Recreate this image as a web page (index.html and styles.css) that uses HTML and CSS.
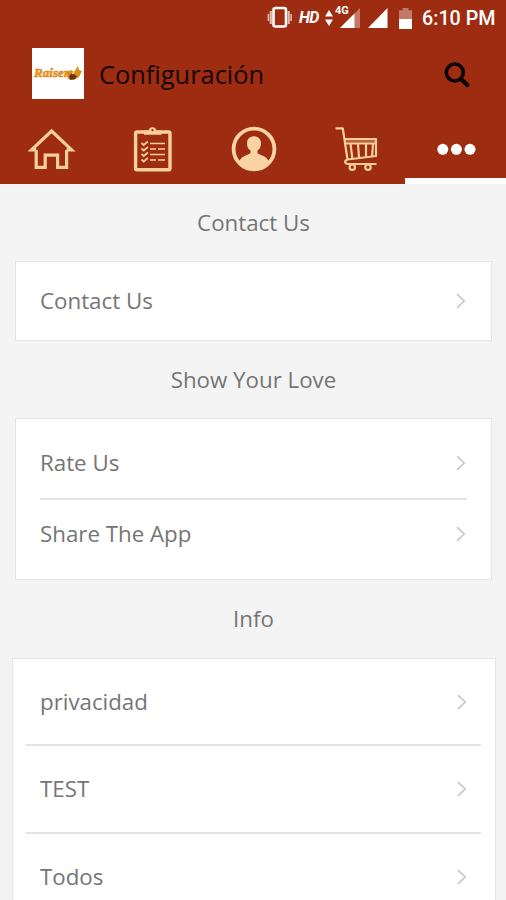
FILE: index.html
```
<!DOCTYPE html>
<html lang="es">
<head>
<meta charset="utf-8">
<meta name="viewport" content="width=device-width">
<title>Configuración</title>
<link rel="stylesheet" href="styles.css">
</head>
<body>
<svg class="sprite" width="0" height="0">
  <symbol id="chevron" viewBox="0 0 12 18"><path d="M2 2.2 9.2 9 2 15.8" fill="none" stroke="#c9c9c9" stroke-width="1.7"/></symbol>
</svg>
<header class="header">
  <div class="status">
    <svg class="vibrate" width="26" height="24" viewBox="267 6 26 24"><rect x="273.5" y="8" width="12.5" height="18.5" rx="2" fill="none" stroke="#fff" stroke-width="2.6"/><path d="M270.8 11v13M288.7 11v13" stroke="#e0bcb0" stroke-width="2.2"/><path d="M268.4 14v7M291.1 14v7" stroke="#e0bcb0" stroke-width="1.6"/></svg>
    <span class="hd">HD</span>
    <svg class="arrows" width="8" height="18" viewBox="0 0 8 18"><path d="M4 1 8 7.5H0zM4 17 0 10.5h8z" fill="#fff"/></svg>
    <div class="cell">
      <svg width="21" height="20" viewBox="0 0 21 20"><path d="M20 0v20H0z" fill="#c27966"/><path d="M14.5 5.5V20H0z" fill="#fff"/></svg>
      <span class="network">4G</span>
    </div>
    <svg class="signal" width="20" height="20" viewBox="0 0 20 20"><path d="M19.5 0v20H0z" fill="#fff"/></svg>
    <svg class="battery" width="13" height="21" viewBox="0 0 13 21"><path d="M3.5 0h6v2.3H13V11H0V2.3h3.5z" fill="#c27966"/><path d="M0 11h13v10H0z" fill="#fff"/></svg>
    <span class="time">6:10 PM</span>
  </div>
  <div class="titlebar">
    <div class="logo"><svg width="50" height="22" viewBox="0 0 50 22"><path d="m33 11 5-3 3 2 4-6 1 4 3 1-3 6-5 3-6-1z" fill="#df8f16"/><path d="m36 14 3-3 5 3-2 3-5 1z" fill="#713018"/><circle cx="40" cy="11" r="1.3" fill="#f3cb72"/><text class="logo-text" x="1" y="14.5" textLength="35" lengthAdjust="spacingAndGlyphs">Raiser</text></svg></div>
    <h1 class="title">Configuración</h1>
    <svg class="search" width="28" height="28" viewBox="444 61 28 28"><circle cx="455.8" cy="72.5" r="8.5" fill="none" stroke="#0b0402" stroke-width="3.6"/><path d="m462 79 6.3 6" stroke="#0b0402" stroke-width="4.4" stroke-linecap="round"/></svg>
  </div>
  <nav class="tabs">
    <a class="tab"><svg width="48" height="48" viewBox="28 125 48 48"><path d="M36.2 150v17.3h9V155.2h12.4v12.1h9V150M36.2 149.8h-4.6L51.6 131l20 18.8h-5" fill="none" stroke="#f9cf98" stroke-width="3.2"/></svg></a>
    <a class="tab"><svg width="42" height="48" viewBox="132 125 42 48"><rect x="135.6" y="132" width="34.4" height="37.7" rx="1.5" fill="none" stroke="#f9cf98" stroke-width="3.4"/><path d="M144 130.5h5q0-3.2 3.5-3.2t3.5 3.2h5.5v4.3H144z" fill="#f9cf98"/><circle cx="152.5" cy="130.2" r="1.1" fill="#9d2c11"/><g fill="none" stroke="#f9cf98" stroke-width="1.7"><path d="m141.5 143 2.2 2 4.2-3.5M141.5 148.5l2.2 2 4.2-3.5M141.5 154l2.2 2 4.2-3.5M141.5 159.5l2.2 2 4.2-3.5"/><path d="M150 143.5h15M150 149h6m2 0h7M150 154.5h15M150 160h6m2 0h7"/></g></svg></a>
    <a class="tab"><svg width="48" height="48" viewBox="230 125 48 48"><circle cx="254" cy="149" r="20.4" fill="none" stroke="#f9d3a3" stroke-width="3.8"/><path d="M254 136.2c4.4 0 7 3 7 7.2 0 3.5-1.6 6-3.5 7.2v2.5c2 2.5 10 2.5 11.6 9.5-4 5.2-8.9 7.5-15.1 7.5s-11.1-2.3-15.1-7.5c1.6-7 9.6-7 11.6-9.5v-2.5c-1.9-1.2-3.5-3.7-3.5-7.2 0-4.2 2.6-7.2 7-7.2z" fill="#f9d3a3"/></svg></a>
    <a class="tab"><svg width="48" height="48" viewBox="331 125 48 48"><path d="M345 141h31" stroke="#bf6342" stroke-width="3"/><g fill="none" stroke="#f9cf98" stroke-width="2.2" stroke-linejoin="round"><path d="M335.5 128.3h7.3l4.7 31.2M345 139h31v17l-28.5 3.5c-3.4 1.2-3 4.5.8 4.5H376.5M345.5 143.5H376"/><path d="m350.5 144 1.8 14M358 144l1 13.5M366 144v12.5M373 144l-.9 12"/><circle cx="352.3" cy="167.2" r="2.7"/><circle cx="368" cy="167.2" r="2.7"/></g></svg></a>
    <a class="tab active"><svg width="42" height="48" viewBox="435 125 42 48"><g fill="#fff"><circle cx="442.8" cy="149.3" r="5.5"/><circle cx="456.4" cy="149.3" r="5.5"/><circle cx="470" cy="149.3" r="5.5"/></g></svg></a>
  </nav>
</header>
<main>
  <h2 class="heading">Contact Us</h2>
  <section class="card">
    <div class="row"><span>Contact Us</span><svg class="chevron"><use href="#chevron"/></svg></div>
  </section>
  <h2 class="heading">Show Your Love</h2>
  <section class="card love">
    <div class="row"><span>Rate Us</span><svg class="chevron"><use href="#chevron"/></svg></div>
    <div class="row"><span>Share The App</span><svg class="chevron"><use href="#chevron"/></svg></div>
  </section>
  <h2 class="heading">Info</h2>
  <section class="card info">
    <div class="row"><span>privacidad</span><svg class="chevron"><use href="#chevron"/></svg></div>
    <div class="row"><span>TEST</span><svg class="chevron"><use href="#chevron"/></svg></div>
    <div class="row"><span>Todos</span><svg class="chevron"><use href="#chevron"/></svg></div>
  </section>
</main>
</body>
</html>
```
FILE: styles.css
```
* { box-sizing: border-box; }
html, body { height: 900px; overflow: hidden; }
body { margin: 0; background: #f4f4f4; color: #757575; font: 22.3px/30px "Open Sans", sans-serif; }
svg { display: block; flex: none; }
.sprite { position: absolute; }
.header { height: 184px; background: #9d2c11; }
.status { display: flex; align-items: center; height: 36px; padding-left: 267px; color: #fff; font-family: Roboto, sans-serif; white-space: nowrap; }
.hd { width: 21px; margin-left: 6px; font-size: 16px; font-style: italic; font-weight: 700; letter-spacing: -.7px; }
.arrows { margin-left: 5px; }
.cell { position: relative; margin-left: 7px; }
.network { position: absolute; left: -5px; top: -3px; font-size: 11px; font-weight: 700; line-height: 12px; }
.signal { margin-left: 7px; }
.battery { margin-left: 11px; }
.time { margin-left: 10px; padding-top: 1px; font-size: 19.7px; font-weight: 500; }
.titlebar { display: flex; align-items: center; height: 76px; padding: 0 35px 2px 32px; }
.logo { display: flex; align-items: center; justify-content: center; width: 52px; height: 51px; background: #fff; }
.logo-text { fill: #f49a12; stroke: #d97a13; stroke-width: .5px; font: italic 700 13px "Liberation Serif", serif; }
.title { margin: 0 auto 0 15px; padding-top: 2px; color: #180703; font-size: 25.4px; font-weight: 400; line-height: 34px; }
.search { margin-top: 3px; }
.tabs { display: grid; grid-template-columns: repeat(5, 1fr); height: 72px; }
.tab { display: flex; justify-content: center; padding: 13px 0 0 2px; border-bottom: 6px solid transparent; }
.active { border-color: #fff; }
.heading { margin: 0; height: 77px; padding: 24px 0 0 1px; text-align: center; font-size: inherit; font-weight: 400; }
.card { margin: 0 14px 0 15px; border: 1px solid #e4e4e4; background: #fff; padding: 0 24px; }
.row { display: flex; align-items: center; justify-content: space-between; height: 78px; }
.chevron { width: 12px; height: 18px; }
.love { padding: 9px 24px 11px; }
.love .row { height: 70px; }
.row + .row { border-top: 2px solid #e4e4e4; }
.info { margin: 1px 10px 0 12px; padding: 0 14px 0 13px; }
.info .row { height: 88px; padding: 0 13px 0 14px; }
.info .row:first-child { height: 85px; }
```
